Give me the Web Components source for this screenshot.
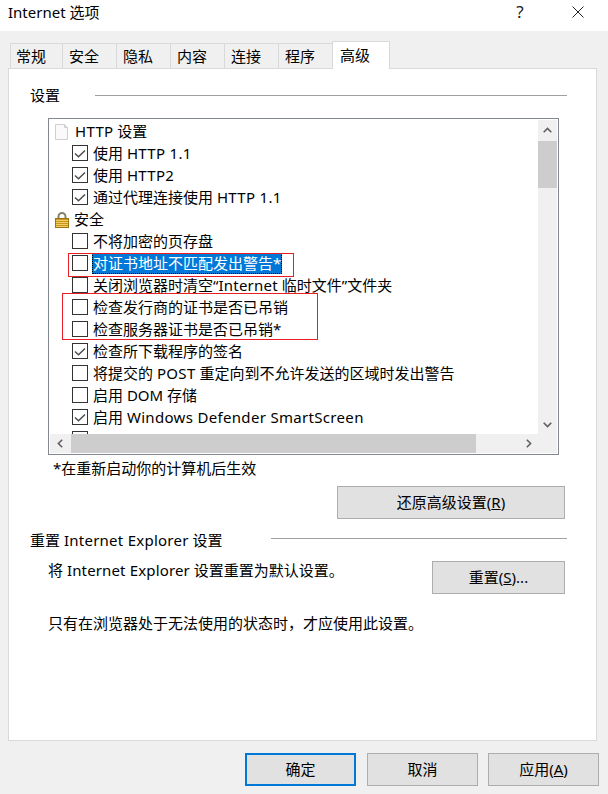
<!DOCTYPE html>
<html lang="zh">
<head>
<meta charset="utf-8">
<title>Internet 选项</title>
<style>
  html, body { margin: 0; padding: 0; background: #f0f0f0; }
  body {
    font: 15px/22px "Noto Sans", "Noto Sans CJK SC", sans-serif;
    color: #000;
  }
  /* latin runs come out a little narrower than in the original dialog */
  .l1 { letter-spacing: .15px; }
  .l2 { letter-spacing: .25px; }
  .l3 { letter-spacing: .32px; }
</style>
</head>
<body>
<win-dialog>
  <title-bar>Internet 选项</title-bar>
  <tab-strip>
    <tab-item>常规</tab-item>
    <tab-item>安全</tab-item>
    <tab-item>隐私</tab-item>
    <tab-item>内容</tab-item>
    <tab-item>连接</tab-item>
    <tab-item>程序</tab-item>
    <tab-item selected>高级</tab-item>
  </tab-strip>
  <tab-pane>
    <group-title>设置</group-title>
    <scroll-list>
      <list-row icon="page"><span class="l3">HTTP</span> 设置</list-row>
      <list-row check="on">使用 <span class="l3">HTTP 1.1</span></list-row>
      <list-row check="on">使用 <span class="l3">HTTP2</span></list-row>
      <list-row check="on">通过代理连接使用 <span class="l3">HTTP 1.1</span></list-row>
      <list-row icon="lock" tight>安全</list-row>
      <list-row check="off">不将加密的页存盘</list-row>
      <list-row check="off" selected>对证书地址不匹配发出警告*</list-row>
      <list-row check="off">关闭浏览器时清空“<span class="l2">Internet</span> 临时文件”文件夹</list-row>
      <list-row check="off">检查发行商的证书是否已吊销</list-row>
      <list-row check="off">检查服务器证书是否已吊销*</list-row>
      <list-row check="on">检查所下载程序的签名</list-row>
      <list-row check="off">将提交的 <span class="l3">POST</span> 重定向到不允许发送的区域时发出警告</list-row>
      <list-row check="off">启用 DOM 存储</list-row>
      <list-row check="on">启用 <span class="l3">Windows Defender SmartScreen</span></list-row>
      <list-row check="off"></list-row>
    </scroll-list>
    <note-row>
      <span>*在重新启动你的计算机后生效</span>
      <win-button style="width:228px"><span>还原高级设置(<u>R</u>)</span></win-button>
    </note-row>
    <group-title gap="271">重置 <span class="l2">Internet Explorer</span> 设置</group-title>
    <reset-row>
      <span>将 <span class="l1">Internet Explorer</span> 设置重置为默认设置。</span>
      <win-button style="width:133px"><span>重置(<u>S</u>)...</span></win-button>
    </reset-row>
    <plain-note>只有在浏览器处于无法使用的状态时，才应使用此设置。</plain-note>
    <red-box style="left:59px;top:184px;width:224px;height:22px"></red-box>
    <red-box style="left:53px;top:224px;width:254px;height:45px"></red-box>
  </tab-pane>
  <button-bar>
    <win-button default style="width:111px;margin-right:1px"><span>确定</span></win-button>
    <win-button style="width:111px"><span>取消</span></win-button>
    <win-button style="width:111px"><span>应用(<u>A</u>)</span></win-button>
  </button-bar>
</win-dialog>

<script>
// small helper, every component is just a style block plus markup
function define(name, css, html, extra) {
  class C extends HTMLElement {
    constructor() {
      super();
      this.attachShadow({ mode: 'open' });
      this.shadowRoot.innerHTML = `<style>${css}</style>${html}`;
    }
    connectedCallback() {
      if (extra) extra.call(this);
    }
  }
  customElements.define(name, C);
}

define('win-dialog', `
  :host { display: flex; flex-direction: column; width: 608px; height: 794px; overflow: hidden; background: #f0f0f0; }
`, `<slot></slot>`);

define('title-bar', `
  :host { display: flex; align-items: center; height: 31px; flex: none; background: #fff; padding: 0 0 7px 8px; box-sizing: border-box; }
  .title { flex: 1; }
  .help { width: 12px; margin-right: 46px; font-size: 17px; color: #222; text-align: center; }
  svg { margin-right: 24px; display: block; }
`, `<div class="title"><slot></slot></div>
  <div class="help">?</div>
  <svg width="12" height="12" viewBox="0 0 12 12"><path d="M.5.5l11 11M11.5.5l-11 11" stroke="#222" stroke-width="1" fill="none"/></svg>`);

define('tab-strip', `
  :host { display: flex; align-items: flex-end; height: 27px; margin: 10px 0 0 10px; flex: none; position: relative; z-index: 1; }
`, `<slot></slot>`);

define('tab-item', `
  :host { display: block; box-sizing: border-box; width: 54px; height: 25px; padding-left: 6px;
    background: #f0f0f0; border: 1px solid #d9d9d9; border-left-width: 0; border-bottom: 0; line-height: 24px; }
  :host(:first-child) { border-left-width: 1px; width: 53px; padding-left: 5px; }
  :host([selected]) { width: 58px; height: 28px; background: #fff; margin: 0 0 -1px -1px; padding-left: 7px;
    border-left-width: 1px; line-height: 26px; }
`, `<slot></slot>`);

define('tab-pane', `
  :host { display: block; position: relative; box-sizing: border-box; width: 589px; height: 673px; margin-left: 8px; flex: none;
    background: #fff; border: 1px solid #d9d9d9; padding: 14px 29px 0 21px; }
`, `<slot></slot>`);

define('group-title', `
  :host { display: flex; height: 24px; line-height: 24px; --ly: 12px; }
  .t { width: var(--w, 65px); flex: none; white-space: nowrap; }
  .line { flex: 1; height: 1px; background: #a0a0a0; margin-top: var(--ly); }
`, `<div class="t"><slot></slot></div><div class="line"></div>`, function () {
  if (this.hasAttribute('gap')) {
    this.style.setProperty('--w', (this.getAttribute('gap') - 30) + 'px');
    this.style.setProperty('--ly', '10px');
    this.style.marginTop = '9px';
  }
});

define('scroll-list', `
  :host { display: block; position: relative; box-sizing: border-box; width: 511px; height: 337px; margin: 11px 0 0 18px; border: 1px solid #828790; overflow: hidden; background: #fff; }
  .grid { display: grid; grid-template: 1fr 19px / 1fr 19px; height: 333px; margin: 1px; width: 507px; }
  .rows { overflow: hidden; height: 314px; }
  .v { grid-row: 1 / 3; grid-column: 2; background: #f0f0f0; display: flex; flex-direction: column; }
  .h { grid-row: 2; grid-column: 1; background: #f0f0f0; display: flex; }
  .arrow { flex: none; width: 19px; height: 19px; display: flex; align-items: center; justify-content: center; }
  .vthumb { width: 19px; height: 47px; background: #cdcdcd; margin-top: 2px; }
  .spring { flex: 1; }
  .hthumb { height: 19px; width: 405px; background: #cdcdcd; margin-left: 2px; }
`, `<div class="grid">
    <div class="rows"><slot></slot></div>
    <div class="v">
      <div class="arrow"><svg width="9" height="6" viewBox="0 0 9 6"><path d="M.7 5.2 4.5 1.4l3.8 3.8" stroke="#606060" stroke-width="1.6" fill="none"/></svg></div>
      <div class="vthumb"></div><div class="spring"></div>
      <div class="arrow" style="margin-bottom:19px"><svg width="9" height="6" viewBox="0 0 9 6"><path d="M.7.8l3.8 3.8L8.3.8" stroke="#606060" stroke-width="1.6" fill="none"/></svg></div>
    </div>
    <div class="h">
      <div class="arrow"><svg width="6" height="9" viewBox="0 0 6 9"><path d="M5.2.7 1.4 4.5l3.8 3.8" stroke="#606060" stroke-width="1.6" fill="none"/></svg></div>
      <div class="hthumb"></div><div class="spring"></div>
      <div class="arrow"><svg width="6" height="9" viewBox="0 0 6 9"><path d="M.8.7l3.8 3.8L.8 8.3" stroke="#606060" stroke-width="1.6" fill="none"/></svg></div>
    </div>
  </div>`);

const ICONS = {
  page: `<svg width="14" height="16" viewBox="0 0 14 16"><path d="M.5.5h9l3 3v12H.5z" fill="#fafafa" stroke="#cfcfcf"/><path d="M9.5.5v3h3z" fill="#e8e8e8" stroke="#cfcfcf"/></svg>`,
  lock: `<svg width="14" height="16" viewBox="0 0 14 16"><path d="M3.5 7V4.5a3.5 3.5 0 0 1 7 0V7" fill="none" stroke="#87806a" stroke-width="2"/><rect x=".5" y="6.5" width="13" height="9" fill="#c9971f" stroke="#9c7412"/><path d="M1 8.5h12M1 10.5h12M1 12.5h12M1 14.5h12" stroke="#f0cf62"/></svg>`
};

define('list-row', `
  :host { display: block; height: 22px; line-height: 22px; white-space: nowrap; }
  .row { display: flex; align-items: center; height: 22px; }
  .ico { width: 14px; height: 16px; margin: 0 5px 0 5px; flex: none; display: block; }
  :host([tight]) .ico { margin-right: 4px; }
  .box { box-sizing: border-box; width: 16px; height: 16px; margin: 0 4px 0 22px; border: 1px solid #333; flex: none; display: flex; align-items: center; justify-content: center; }
  .label { padding: 0 1px; height: 20px; line-height: 20px; box-sizing: border-box; }
  :host([selected]) .label { background: #0078d7; color: #fff; outline: 1px dotted #000; outline-offset: -1px; height: 21px; padding-top: 0; align-self: flex-start; margin-top: 1px; }
`, `<div class="row"></div>`, function () {
  const row = this.shadowRoot.querySelector('.row');
  const icon = this.getAttribute('icon');
  const check = this.getAttribute('check');
  let html = '';
  if (icon) html += `<span class="ico">${ICONS[icon]}</span>`;
  if (check) {
    html += `<span class="box">${check === 'on' ? '<svg width="12" height="10" viewBox="0 0 12 10"><path d="M1 5.5l3.5 3.2L11 2.5" stroke="#4d4d4d" stroke-width="1.5" fill="none"/></svg>' : ''}</span>`;
  }
  html += `<span class="label"><slot></slot></span>`;
  row.innerHTML = html;
});

define('note-row', `
  :host { display: flex; flex-direction: column; align-items: flex-end; position: relative; }
  ::slotted(span) { align-self: flex-start; margin: 2px 0 7px 23px; line-height: 22px; }
  ::slotted(win-button) { margin-right: 2px; }
`, `<slot></slot>`);

define('reset-row', `
  :host { display: flex; justify-content: space-between; align-items: flex-start; margin: 7px 0 0 18px; }
  ::slotted(win-button) { margin: 2px 2px 0 0; }
`, `<slot></slot>`);

define('plain-note', `
  :host { display: block; margin: 18px 0 0 18px; line-height: 22px; }
`, `<slot></slot>`);

define('win-button', `
  :host { display: flex; box-sizing: border-box; height: 33px; padding-bottom: 2px; align-items: center; justify-content: center; flex: none;
    background: #e1e1e1; border: 1px solid #adadad; line-height: 20px; }
  :host([default]) { border: 2px solid #0078d7; }
`, `<slot></slot>`);

define('button-bar', `
  :host { display: flex; justify-content: flex-end; gap: 10px; padding: 12px 9px 0 0; flex: none; }
`, `<slot></slot>`);

define('red-box', `
  :host { position: absolute; display: block; border: 1px solid #ea1c24; pointer-events: none; }
`, ``);
</script>
</body>
</html>
